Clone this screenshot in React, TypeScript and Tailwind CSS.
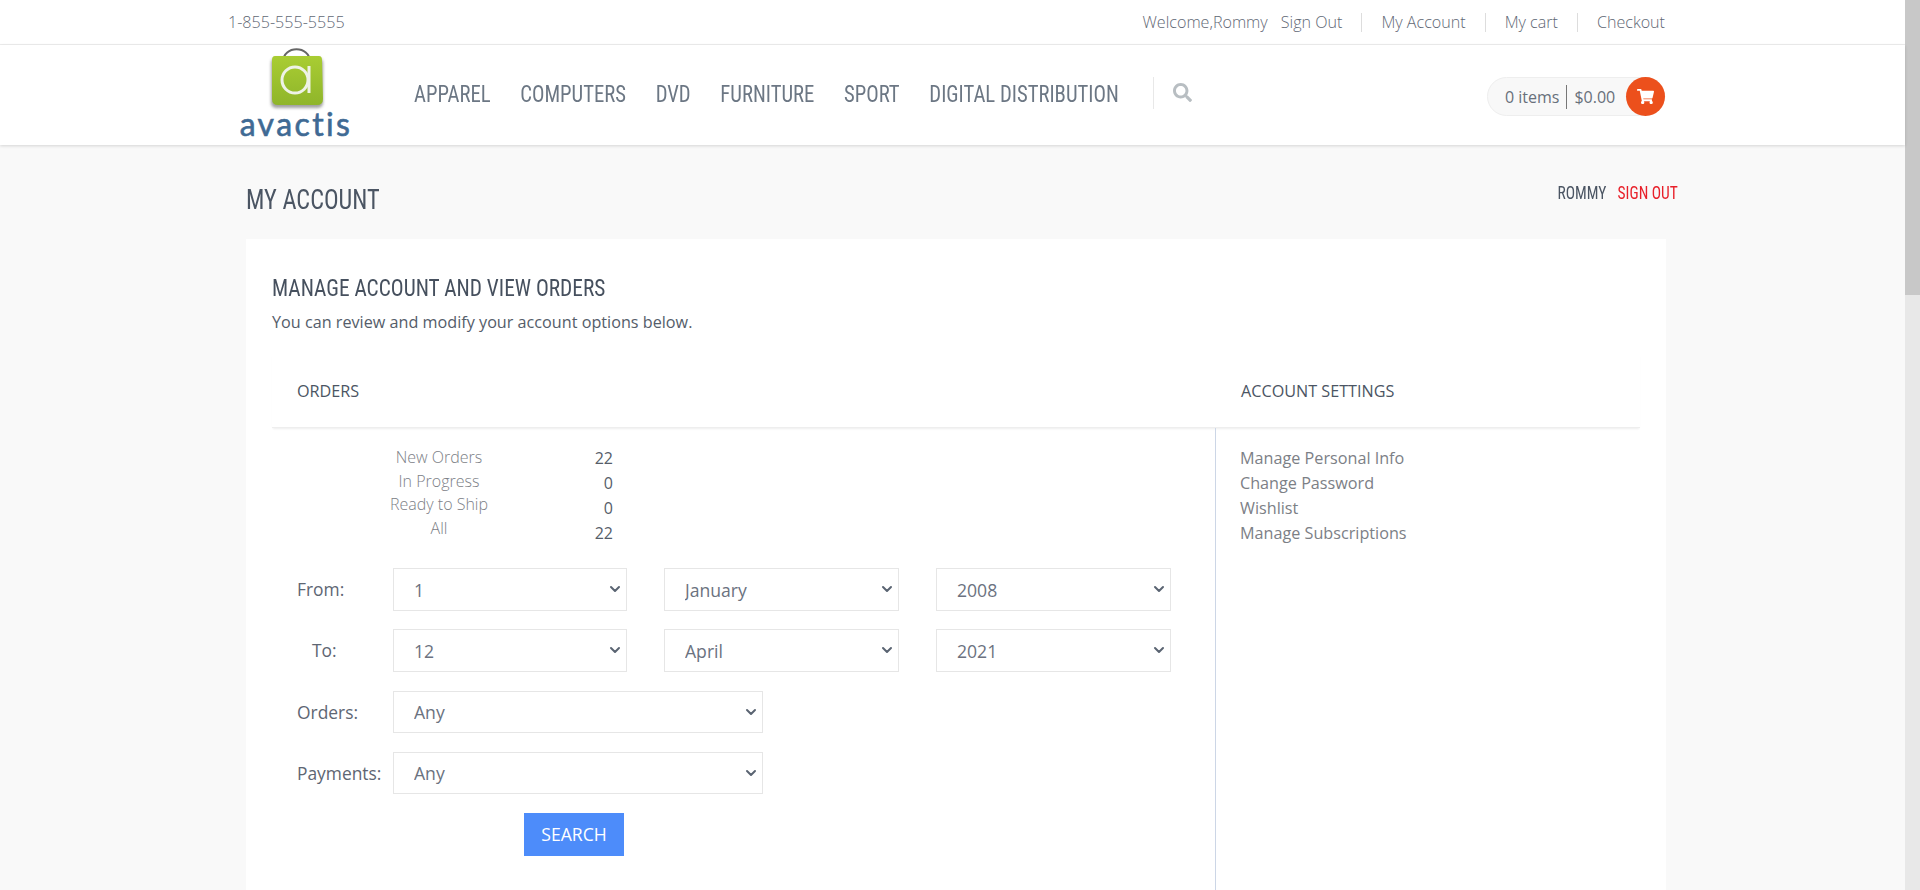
import { ChevronDown } from "lucide-react";
import { FaSearch, FaShoppingCart } from "react-icons/fa";

const navItems = ["APPAREL", "COMPUTERS", "DVD", "FURNITURE", "SPORT", "DIGITAL DISTRIBUTION"];
const narrow = "font-['Roboto_Condensed','Liberation_Sans_Narrow',sans-serif]";

function AvactisLogo() {
    return (
        <svg width="120" height="96" viewBox="0 0 120 96" className="block">
            <defs>
                <linearGradient id="bag" x1="0" y1="0" x2="0" y2="1">
                    <stop offset="0" stopColor="#a9cd33" />
                    <stop offset="1" stopColor="#8fb52a" />
                </linearGradient>
                <filter id="soft"><feGaussianBlur stdDeviation="1.4" /></filter>
            </defs>
            <path d="M43 15 C43 -2 70 -2 70 15" fill="none" stroke="#666" strokeWidth="2" />
            <rect x="31" y="11" width="52" height="50" rx="5" fill="#555" opacity="0.55" filter="url(#soft)" />
            <path d="M35 9 H79 Q82 9 82 13 L83 52 Q83 58 77 58 H38 Q32 58 32 52 L32 13 Q32 9 35 9 Z" fill="url(#bag)" />
            <circle cx="55" cy="33" r="13" fill="none" stroke="#eef2e6" strokeWidth="3" />
            <line x1="69" y1="19" x2="69" y2="46" stroke="#eef2e6" strokeWidth="3" />
            <text x="56" y="89" textAnchor="middle" fill="#3f6a94" stroke="#3f6a94" strokeWidth="0.6" fontSize="32" letterSpacing="2.4" fontFamily="Lato, sans-serif">avactis</text>
        </svg>
    );
}

function Select({ value, className }: { value: string; className: string }) {
    return (
        <div className={`relative ${className}`}>
            <select
                defaultValue={value}
                className="h-full w-full appearance-none border border-[#e6e6e6] bg-white pl-[20px] pt-[1px] text-[17.6px] text-[#6b7280] outline-none"
            >
                <option>{value}</option>
            </select>
            <ChevronDown size={16} strokeWidth={3} className="pointer-events-none absolute right-[4px] top-[13px] text-[#5a6472]" />
        </div>
    );
}

export default function App() {
    return (
        <div className="h-[890px] overflow-hidden bg-[#f9f9f9] font-['Open_Sans',sans-serif] text-[#5e6673] flex">
            <div className="w-[1905px] shrink-0">
                {/* TOP BAR */}
                <div className="h-[45px] pt-[1px] bg-white border-b border-[#eeeeee] pl-[228px] pr-[240px] flex items-center justify-between font-light text-[16.1px] text-[#5f6875]">
                    <span>1-855-555-5555</span>
                    <div className="flex items-center">
                        <span>Welcome,Rommy</span>
                        <span className="ml-[13px] pr-[19px] border-r border-[#dddddd] leading-[19px]">Sign Out</span>
                        <span className="px-[19px] border-r border-[#dddddd] leading-[19px]">My Account</span>
                        <span className="px-[19px] border-r border-[#dddddd] leading-[19px]">My cart</span>
                        <span className="pl-[19px] leading-[19px]">Checkout</span>
                    </div>
                </div>

                {/* HEADER */}
                <div className="h-[100px] bg-white shadow-[0_1px_3px_rgba(0,0,0,0.15)] pl-[240px] pr-[240px] flex items-start relative">
                    <div className="mt-[2px] w-[174px]">
                        <AvactisLogo />
                    </div>
                    <div className="w-[739px] mt-[35px]">
                        <nav className={`origin-left scale-x-[0.9] flex items-center gap-[33px] whitespace-nowrap text-[23px] leading-[30px] text-[#6c7784] ${narrow}`}>
                            {navItems.map(item => (
                                <span key={item}>{item}</span>
                            ))}
                        </nav>
                    </div>
                    <div className="mt-[32px] h-[32px] border-l border-[#e8e8e8] pl-[19px] pt-[6px]">
                        <FaSearch size={19} className="text-[#b8bec2]" />
                    </div>
                    <div className="ml-auto mt-[32px] h-[39px] w-[178px] rounded-full bg-[#f8f8f8] border border-[#eeeeee] flex items-center pl-[17px] text-[16px] text-[#68707b]">
                        <span>0 items</span>
                        <span className="mx-[7px] h-[24px] border-l border-[#777777]"></span>
                        <span>$0.00</span>
                        <span className="ml-auto -mr-px h-[39px] w-[39px] rounded-full bg-[#ec501c] flex items-center justify-center text-white">
                            <FaShoppingCart size={17} />
                        </span>
                    </div>
                </div>

                {/* TITLE */}
                <div className="h-[94px] pl-[246px] pr-[227px] flex items-start justify-between">
                    <h1 className={`origin-left scale-x-[0.87] mt-[37px] text-[28px] leading-[36px] text-[#4b5563] ${narrow}`}>MY ACCOUNT</h1>
                    <div className={`origin-right scale-x-[0.86] mt-[37px] flex gap-[13px] text-[18px] leading-[22px] ${narrow}`}>
                        <span className="text-[#4b5563]">ROMMY</span>
                        <span className="text-[#e8202a]">SIGN OUT</span>
                    </div>
                </div>

                {/* CARD */}
                <div className="ml-[246px] w-[1420px] h-[651px] bg-white px-[26px] pt-[34px]">
                    <h2 className={`origin-left scale-x-[0.89] text-[24px] leading-[30px] text-[#46505e] ${narrow}`}>MANAGE ACCOUNT AND VIEW ORDERS</h2>
                    <p className="mt-[7px] text-[16.2px] leading-[24px] text-[#555d6a]">You can review and modify your account options below.</p>

                    <div className="mt-[19px] h-[75px] pt-[2px] flex items-center border-b border-[#eeeeee] shadow-[0_2px_2px_-1px_rgba(0,0,0,0.07)] text-[16.2px] text-[#4b5563]">
                        <span className="ml-[25px] w-[944px]">ORDERS</span>
                        <span>ACCOUNT SETTINGS</span>
                    </div>

                    <div className="flex">
                        {/* ORDERS */}
                        <div className="w-[944px] h-[500px] border-r border-[#ccd6e6] pl-[25px] pt-[18px]">
                            <div className="flex w-[316px] text-[16px]">
                                <div className="w-[284px] text-center font-light text-[#7c8086] leading-[23.5px] whitespace-nowrap">
                                    <div>New Orders</div>
                                    <div>In Progress</div>
                                    <div>Ready to Ship</div>
                                    <div>All</div>
                                </div>
                                <div className="ml-auto text-right text-[#565d69] leading-[25px]">
                                    <div>22</div>
                                    <div>0</div>
                                    <div>0</div>
                                    <div>22</div>
                                </div>
                            </div>

                            <div className="mt-[22px] flex items-center h-[43px]">
                                <span className="w-[96px] text-[17.4px]">From:</span>
                                <Select value="1" className="w-[234px] h-[43px]" />
                                <Select value="January" className="ml-[37px] w-[235px] h-[43px]" />
                                <Select value="2008" className="ml-[37px] w-[235px] h-[43px]" />
                            </div>
                            <div className="mt-[18px] flex items-center h-[43px]">
                                <span className="w-[96px] pl-[15px] text-[17.4px]">To:</span>
                                <Select value="12" className="w-[234px] h-[43px]" />
                                <Select value="April" className="ml-[37px] w-[235px] h-[43px]" />
                                <Select value="2021" className="ml-[37px] w-[235px] h-[43px]" />
                            </div>
                            <div className="mt-[19px] flex items-center h-[42px]">
                                <span className="w-[96px] text-[17.4px]">Orders:</span>
                                <Select value="Any" className="w-[370px] h-[42px]" />
                            </div>
                            <div className="mt-[19px] flex items-center h-[42px]">
                                <span className="w-[96px] text-[17.4px]">Payments:</span>
                                <Select value="Any" className="w-[370px] h-[42px]" />
                            </div>
                            <button className="mt-[19px] ml-[227px] w-[100px] h-[43px] bg-[#4d8cfa] text-white text-[17.6px]">SEARCH</button>
                        </div>

                        {/* SETTINGS */}
                        <div className="pl-[24px] pt-[18px] text-[16.2px] leading-[25px] text-[#7c8086]">
                            <div>Manage Personal Info</div>
                            <div>Change Password</div>
                            <div>Wishlist</div>
                            <div>Manage Subscriptions</div>
                        </div>
                    </div>
                </div>
            </div>

            {/* SCROLLBAR */}
            <div className="w-[15px] h-full bg-[#e8e8e8]">
                <div className="h-[295px] bg-[#c8c8c8]"></div>
            </div>
        </div>
    );
}
